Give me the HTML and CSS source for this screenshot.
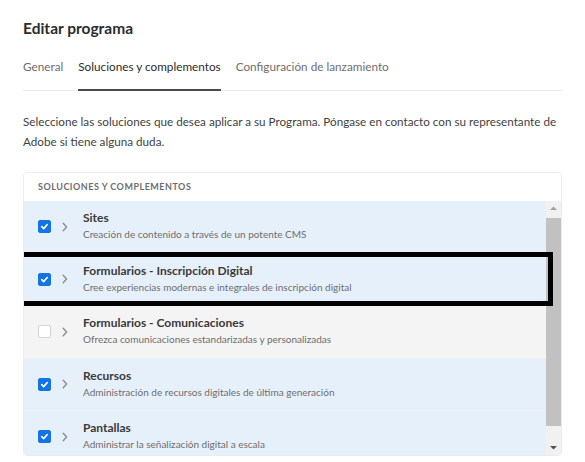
FILE: index.html
```html
<!DOCTYPE html>
<html lang="es">
<head>
<meta charset="utf-8">
<link rel="stylesheet" href="styles.css">
</head>
<body>
<div class="page">
  <h1 class="title">Editar programa</h1>
  <nav class="tabs">
    <span class="tab">General</span>
    <span class="tab active">Soluciones y complementos</span>
    <span class="tab">Configuración de lanzamiento</span>
  </nav>
  <p class="intro">Seleccione las soluciones que desea aplicar a su Programa. Póngase en contacto con su representante de<br>Adobe si tiene alguna duda.</p>
  <div class="table">
    <div class="thead">SOLUCIONES Y COMPLEMENTOS</div>
    <div class="tbody">
      <div class="rows">
        <div class="row checked">
          <span class="cb on"><svg viewBox="0 0 12 12"><path d="M3 6.2 5.1 8.3 9 3.9"/></svg></span>
          <svg class="chev" viewBox="0 0 6 10"><path d="M1.2 1.3 4.6 5 1.2 8.7"/></svg>
          <div class="text"><div class="name">Sites</div><div class="desc">Creación de contenido a través de un potente CMS</div></div>
        </div>
        <div class="row checked highlighted">
          <span class="cb on"><svg viewBox="0 0 12 12"><path d="M3 6.2 5.1 8.3 9 3.9"/></svg></span>
          <svg class="chev" viewBox="0 0 6 10"><path d="M1.2 1.3 4.6 5 1.2 8.7"/></svg>
          <div class="text"><div class="name">Formularios - Inscripción Digital</div><div class="desc">Cree experiencias modernas e integrales de inscripción digital</div></div>
        </div>
        <div class="row">
          <span class="cb"></span>
          <svg class="chev" viewBox="0 0 6 10"><path d="M1.2 1.3 4.6 5 1.2 8.7"/></svg>
          <div class="text"><div class="name">Formularios - Comunicaciones</div><div class="desc">Ofrezca comunicaciones estandarizadas y personalizadas</div></div>
        </div>
        <div class="row checked">
          <span class="cb on"><svg viewBox="0 0 12 12"><path d="M3 6.2 5.1 8.3 9 3.9"/></svg></span>
          <svg class="chev" viewBox="0 0 6 10"><path d="M1.2 1.3 4.6 5 1.2 8.7"/></svg>
          <div class="text"><div class="name">Recursos</div><div class="desc">Administración de recursos digitales de última generación</div></div>
        </div>
        <div class="row checked">
          <span class="cb on"><svg viewBox="0 0 12 12"><path d="M3 6.2 5.1 8.3 9 3.9"/></svg></span>
          <svg class="chev" viewBox="0 0 6 10"><path d="M1.2 1.3 4.6 5 1.2 8.7"/></svg>
          <div class="text"><div class="name">Pantallas</div><div class="desc">Administrar la señalización digital a escala</div></div>
        </div>
      </div>
      <div class="scrollbar">
        <div class="sb-btn"><svg viewBox="0 0 15 15"><path class="up" d="M4 9h7L7.5 5.5z"/></svg></div>
        <div class="thumb"></div>
        <div class="sb-btn"><svg viewBox="0 0 15 15"><path class="down" d="M4 6h7L7.5 9.5z"/></svg></div>
      </div>
    </div>
  </div>
</div>
</body>
</html>
```

FILE: styles.css
```css
* { box-sizing: border-box; }
html, body { margin: 0; padding: 0; background: #fff; }
body { font-family: Lato, "Liberation Sans", sans-serif; color: #4b4b4b; }
.page { padding: 18px 23px 0 23px; width: 585px; height: 462px; overflow: hidden; }
.title { margin: 0; font-size: 15.5px; line-height: 20px; font-weight: 700; color: #2c2c2c; }
.tabs { display: flex; gap: 15px; margin-top: 22px; border-bottom: 1px solid #eaeaea; height: 31px; }
.tab { font-size: 11.75px; line-height: 14px; padding-top: 0; color: #6e6e6e; height: 31px; }
.tab.active { color: #2c2c2c; border-bottom: 2px solid #4b4b4b; margin-bottom: -1px; height: 31px; }
.intro { margin: 20px 0 0 0; font-size: 11.7px; line-height: 20px; color: #3f3f3f; white-space: nowrap; }
.table { margin-top: 21px; border: 1px solid #ececec; border-radius: 4px; overflow: hidden; height: 284px; }
.thead { height: 28px; padding: 8px 0 0 14px; font-size: 9px; line-height: 12px; font-weight: 700; letter-spacing: 0.5px; color: #6e6e6e; background: #fff; }
.tbody { display: flex; height: 254px; }
.rows { flex: 1; display: flex; flex-direction: column; }
.row { position: relative; flex: none; height: 52.5px; display: flex; align-items: center; padding-left: 14px; background: #f4f4f4; border-bottom: 1px solid #eef3f9; }
.row.checked { background: #e6f0fb; }
.highlighted::after { content: ""; position: absolute; left: -6px; right: -7px; top: -2px; bottom: -1px; border: 5px solid #000; }
.cb { width: 13px; height: 13px; border-radius: 2px; background: #fff; border: 1px solid #d3d3d3; display: flex; align-items: center; justify-content: center; }
.cb.on { background: #1473e6; border-color: #1473e6; }
.cb svg { width: 11px; height: 11px; fill: none; stroke: #fff; stroke-width: 1.8; stroke-linecap: round; stroke-linejoin: round; }
.chev { width: 6px; height: 10px; margin-left: 11px; fill: none; stroke: #909090; stroke-width: 1.5; stroke-linecap: round; stroke-linejoin: round; }
.text { margin-left: 15px; padding-bottom: 1px; }
.name { font-size: 12px; line-height: 16px; font-weight: 700; color: #3a3a3a; }
.desc { font-size: 10px; line-height: 16px; color: #6e6e6e; }
.scrollbar { width: 15px; flex: none; background: #f1f1f1; display: flex; flex-direction: column; }
.sb-btn { height: 15px; flex: none; }
.sb-btn svg { width: 15px; height: 15px; display: block; }
.up { fill: #a3a3a3; }
.down { fill: #505050; }
.thumb { flex: 1; margin: 2px 0 14px 0; background: #c1c1c1; }
```
